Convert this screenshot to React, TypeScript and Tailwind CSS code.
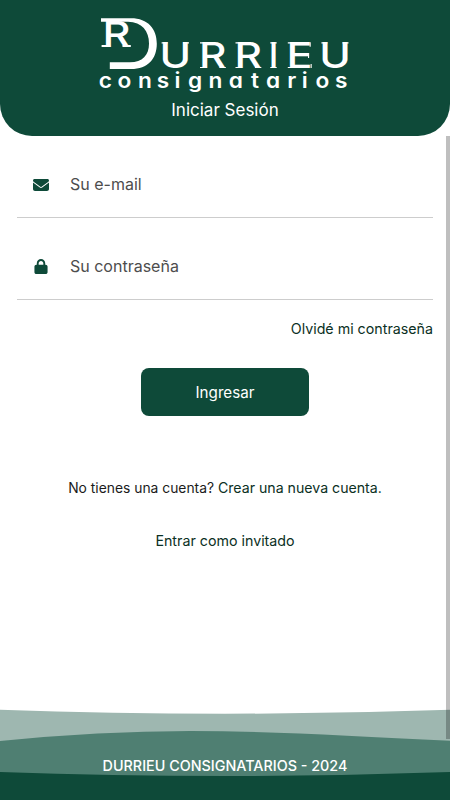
import { FaEnvelope, FaLock } from "react-icons/fa6";

const NAME = [
  { c: "U", x: 160.4, w: 31.6 },
  { c: "R", x: 200, w: 27.5 },
  { c: "R", x: 235.5, w: 27.5 },
  { c: "I", x: 269.7, w: 9.6 },
  { c: "E", x: 287.5, w: 26 },
  { c: "U", x: 320.2, w: 31.6 },
];

const TAGLINE_X = "96.6 114.1 132.7 149.1 162.3 178.2 196.8 215.2 232.7 249.2 266.1 278 294.1 311.1";

function Logo() {
  return (
    <svg viewBox="96 12 260 84" className="block h-[84px] w-[260px]" fill="white" aria-label="R Durrieu consignatarios">
      <path d="M102 18.3H132C149 18.3 157.8 29 157.8 43.7C157.8 58.5 149 69 132 69H110.8V62.2H131C143.5 62.2 150 55 150 43.7C150 31 143 22 129 21.8H102Z" />
      <text x="103.6" y="46.8" fontSize="36" fontWeight="500" textLength="28" lengthAdjust="spacingAndGlyphs" fontFamily="Inter, sans-serif">R</text>
      <path d="M102.6 45h8.6v2h-8.6zM123.5 45h8.3v2h-8.3z" />
      {NAME.map((l) => (
        <text key={l.x} x={l.x} y="68" fontSize="35.2" fontWeight="500" textLength={l.w} lengthAdjust="spacingAndGlyphs" fontFamily="Inter, sans-serif">
          {l.c}
        </text>
      ))}
      <path d="M162.6 42.3h6v1.1h-6zM184 42.3h6v1.1h-6zM201 42.3h4v1.1h-4zM201 67h6.6v1.1h-6.6zM220.5 67h6.3v1.1h-6.3zM236.5 42.3h4v1.1h-4zM236.5 67h6.6v1.1h-6.6zM256 67h6.3v1.1h-6.3zM271.3 42.3h6.4v1.1h-6.4zM271.3 67h6.4v1.1h-6.4zM288.8 42.3h4v1.1h-4zM288.8 67h4v1.1h-4zM310.6 42.3h1.1v4.4h-1.1zM311.6 64h1.1v4.1h-1.1zM309 53h1.1v5h-1.1zM322.4 42.3h6v1.1h-6zM343.5 42.3h6v1.1h-6z" />
      <text
        transform="translate(0 87.5) scale(1.1 1)"
        x={TAGLINE_X}
        textAnchor="middle"
        fontSize="20.6"
        fontWeight="600"
        fontFamily="Inter, sans-serif"
        className="[font-feature-settings:'cv11']"
      >
        consignatarios
      </text>
    </svg>
  );
}

function Waves() {
  return (
    <svg viewBox="0 0 450 92" className="absolute inset-0 h-full w-full" preserveAspectRatio="none">
      <path fill="#9eb7b0" d="M0 1.7Q225 9.7 450 1.7V92H0Z" />
      <path fill="#4f7f72" d="M0 33Q100 23 190 23C270 23 350 28 450 32.8V92H0Z" />
      <path fill="#0e4a39" d="M0 64Q225 72 450 64V92H0Z" />
    </svg>
  );
}

export default function App() {
  return (
    <div className="relative flex h-[800px] w-full flex-col overflow-hidden bg-white font-['Inter',sans-serif] text-[#0b3024]">
      <header className="flex h-[136px] shrink-0 flex-col items-center rounded-b-[32px] bg-[#0e4a39] pt-3">
        <Logo />
        <h1 className="mt-[2px] text-[17px] leading-6 text-white">Iniciar Sesión</h1>
      </header>
      <main className="flex flex-1 flex-col px-[17px]">
        <label className="mt-4 flex h-[66px] items-center border-b border-[#cdcdcd] pl-4">
          <FaEnvelope className="h-4 w-4 text-[#0e4a39]" />
          <span className="mb-0.5 ml-[21px] text-base text-[#4d4d4d]">Su e-mail</span>
        </label>
        <label className="mt-4 flex h-[66px] items-center border-b border-[#cdcdcd] pl-4">
          <FaLock className="h-[15px] w-4 text-[#0e4a39]" />
          <span className="mb-0.5 ml-[21px] text-base text-[#4d4d4d]">Su contraseña</span>
        </label>
        <a className="mt-[19px] self-end text-[14.25px] leading-5">Olvidé mi contraseña</a>
        <button className="mt-[29px] h-12 w-[168px] self-center rounded-lg bg-[#0e4a39] pt-0.5 text-[15.2px] text-white">Ingresar</button>
        <p className="mt-[62px] text-center text-[13.85px] leading-5 text-[#1b1b1b]">
          No tienes una cuenta? <a className="text-[14.15px] text-[#0b3024]">Crear una nueva cuenta.</a>
        </p>
        <a className="mt-[33px] text-center text-[14.25px] leading-5">Entrar como invitado</a>
      </main>
      <footer className="relative flex h-[92px] shrink-0 justify-center pt-12">
        <Waves />
        <span className="relative text-[14.35px] leading-5 font-medium text-white">DURRIEU CONSIGNATARIOS - 2024</span>
      </footer>
      <div className="absolute right-0 top-[136px] h-[603px] w-[4.5px] bg-black/25" />
    </div>
  );
}
